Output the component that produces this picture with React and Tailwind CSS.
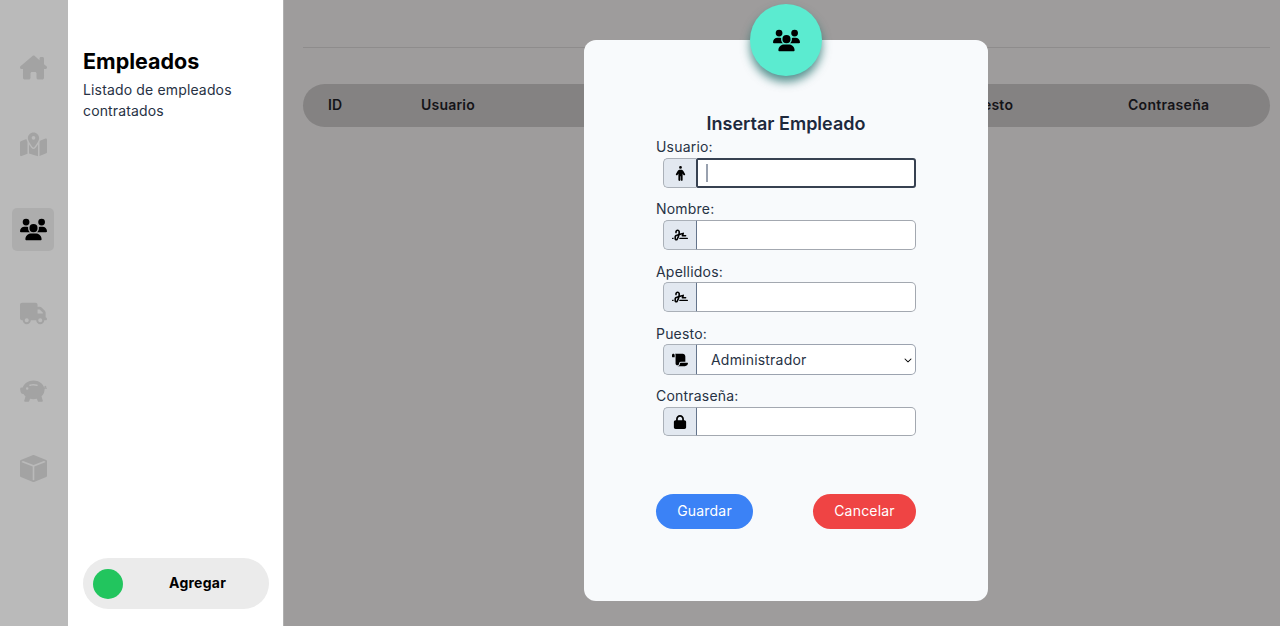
import React from "react";
import { FaHouseChimney, FaMapLocationDot, FaUsers, FaTruck, FaPerson, FaSignature, FaScroll, FaLock, FaChevronDown } from "react-icons/fa6";
import { BsPiggyBankFill, BsBoxFill } from "react-icons/bs";

const rail = [
  { Icon: FaHouseChimney, box: "mt-0" },
  { Icon: FaMapLocationDot, box: "mt-[34px]" },
  { Icon: FaUsers, box: "mt-[42px] bg-[#adadad] text-black" },
  { Icon: FaTruck, box: "mt-[41px]" },
  { Icon: BsPiggyBankFill, box: "mt-[35px]" },
  { Icon: BsBoxFill, box: "mt-[34px]" },
];

function Field({ label, Icon, iconSize = 15, focused, select, gap = "mt-[3px]", height = "h-[30px]", className = "" }) {
  return (
    <div className={className}>
      <label className="block text-sm leading-[17px] tracking-[0.2px] text-[#273244]">{label}</label>
      <div className={`ml-[7px] flex w-[253px] ${gap} ${height}`}>
        <span className="flex w-[33px] shrink-0 items-center justify-center rounded-l-[5px] border border-r-0 border-[#aab0b8] bg-slate-200 text-black">
          <Icon style={{ fontSize: iconSize }} />
        </span>
        {select ? (
          <div className="relative min-w-0 flex-1">
            <select defaultValue="Administrador" className="h-full w-full appearance-none rounded-r-[5px] border border-[#9ca3af] border-l-[#64748b] bg-white pl-[14px] text-sm tracking-[0.2px] text-[#273244] outline-none">
              <option value="Administrador">Administrador</option>
            </select>
            <FaChevronDown className="pointer-events-none absolute right-[4px] top-[12px] text-[8px] text-black" />
          </div>
        ) : focused ? (
          <div className="relative min-w-0 flex-1">
            <input className="h-full w-full rounded-r-[3px] rounded-l-[2px] border-2 border-[#374151] bg-white outline-none" />
            <span className="absolute left-[10px] top-[6px] h-[18px] w-[2px] bg-gray-400" />
          </div>
        ) : (
          <input className="min-w-0 flex-1 rounded-r-[5px] border border-[#a3a8b0] border-l-[#64748b] bg-white outline-none" />
        )}
      </div>
    </div>
  );
}

export default function App() {
  return (
    <div className="relative flex h-[626px] w-[1280px] overflow-hidden bg-[#9e9c9c] [font-family:Inter,sans-serif]">
      <nav className="flex w-[68px] shrink-0 flex-col items-center bg-[#bababa] pr-[2px] pt-[46px]">
        {rail.map(({ Icon, box }, i) => (
          <div key={i} className={`flex h-[43px] w-[42px] items-center justify-center rounded-[5px] text-[#a3a3a3] ${box}`}>
            <Icon className="text-[27px]" />
          </div>
        ))}
      </nav>

      <aside className="flex w-[216px] shrink-0 flex-col border-r-[1px] border-[#b0b0b0] bg-white px-[15px] pb-[17px] pt-[47px]">
        <h1 className="text-[21.5px] font-bold leading-[28px] text-black">Empleados</h1>
        <p className="mt-[4px] text-sm leading-[21px] tracking-[0.15px] text-[#273244]">Listado de empleados contratados</p>
        <button className="mt-auto flex h-[51px] w-[186px] items-center rounded-full bg-[#ebebeb] pl-[10px]">
          <span className="h-[30px] w-[30px] rounded-full bg-[#22c55e]" />
          <span className="ml-[46px] pb-[1px] text-sm font-bold tracking-[0.25px] text-black">Agregar</span>
        </button>
      </aside>

      <main className="min-w-0 flex-1 px-[19px] pt-[47px]">
        <div className="h-px w-[967px] bg-[#8e8c8c]" />
        <div className="mt-[36px] flex h-[43px] w-[967px] items-center rounded-full bg-[#848282] pb-[1px] text-sm font-semibold tracking-[0.2px] text-[#141418]">
          <span className="ml-[25px] w-[93px]">ID</span>
          <span className="w-[544px]">Usuario</span>
          <span className="w-[163px]">Puesto</span>
          <span className="tracking-[0.3px]">Contraseña</span>
        </div>
      </main>

      <div className="absolute left-[584px] top-[40px] flex h-[561px] w-[404px] flex-col rounded-[12px] bg-[#f8fafc] pl-[72px]">
        <div className="absolute left-[166px] top-[-36px] flex h-[72px] w-[72px] items-center justify-center rounded-full bg-[#5beBD0] shadow-[0_6px_10px_rgba(15,100,95,0.7)]">
          <FaUsers className="text-[27px] text-black" />
        </div>
        <h2 className="mt-[73px] w-[260px] text-center text-lg font-semibold leading-[22px] text-slate-800">Insertar Empleado</h2>
        <Field label="Usuario:" Icon={FaPerson} focused className="mt-[3px]" />
        <Field label="Nombre:" Icon={FaSignature} iconSize={16} className="mt-[12px]" />
        <Field label="Apellidos:" Icon={FaSignature} iconSize={16} gap="mt-[2px]" className="mt-[13px]" />
        <Field label="Puesto:" Icon={FaScroll} iconSize={16} select gap="mt-[2px]" height="h-[31px]" className="mt-[13px]" />
        <Field label="Contraseña:" Icon={FaLock} iconSize={14} height="h-[29px]" className="mt-[12px]" />
        <div className="mt-[58px] flex w-[260px] justify-between">
          <button className="h-[35px] w-[97px] rounded-full bg-[#3b82f6] pb-[1px] text-sm tracking-[0.2px] text-white">Guardar</button>
          <button className="h-[35px] w-[103px] rounded-full bg-[#ef4444] pb-[1px] text-sm tracking-[0.2px] text-white">Cancelar</button>
        </div>
      </div>
    </div>
  );
}
